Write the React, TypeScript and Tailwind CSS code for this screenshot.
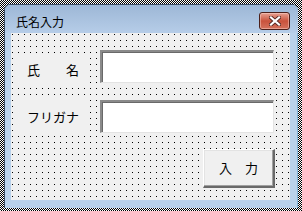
import React from "react";

function CloseIcon() {
  return (
    <svg width="12" height="10" viewBox="0 0 12 10">
      <path d="M2 1.5 L10 8.5 M10 1.5 L2 8.5" stroke="#5a2a24" strokeWidth="4" strokeLinecap="square" />
      <path d="M2 1.5 L10 8.5 M10 1.5 L2 8.5" stroke="#ffffff" strokeWidth="2.2" strokeLinecap="square" />
    </svg>
  );
}

export default function App() {
  const jp = "font-['Noto_Sans_CJK_JP','Noto_Sans_CJK_SC',sans-serif]";
  return (
    <div
      className={`w-[302px] h-[211px] pt-[4px] pl-[4px] bg-[repeating-conic-gradient(#000_0_25%,#fff_0_50%)] bg-size-[2px_2px] ${jp}`}
    >
      <div className="w-[294px] h-[204px] flex flex-col bg-[#b9d1ea] border-l border-t border-[#3b4d63] border-r-[#2bb8d8] border-b-[#2bb8d8] rounded-t-[6px] overflow-hidden shadow-[inset_-1px_0_0_#7fb3d6]">
        <div className="h-[28px] flex items-start bg-gradient-to-b from-[#9db7d6] to-[#b6cde8]">
          <span className="pl-[11px] pt-[10px] text-[12px] leading-[14px] text-black">
            氏名入力
          </span>
          <div className="ml-auto mr-[8px] mt-[7px] w-[31px] h-[18px] rounded-[3px] border border-[#4b1f1a] bg-gradient-to-b from-[#e6a193] via-[#c9523c] to-[#d4715c] flex items-center justify-center shadow-[inset_0_0_0_1px_rgba(255,220,210,0.45)]">
            <CloseIcon />
          </div>
        </div>
        <div className="ml-[6px] w-[279px] h-[167px] bg-[#f0f0f0] bg-[linear-gradient(transparent_1px,#f0f0f0_1px),linear-gradient(90deg,#000_1px,transparent_1px)] bg-size-[6px_6px] bg-[position:1px_1px] pt-[17px] pl-[3px] text-[13px] text-black">
          <div className="flex items-start">
            <div className="mt-[5px] w-[72px] h-[30px] bg-[#f0f0f0] pl-[13px] flex items-center leading-[16px]">
              氏　　名
            </div>
            <div className="ml-[14px] w-[174px] h-[33px] bg-white border-t-2 border-l-2 border-t-[#8a8a8a] border-l-[#8a8a8a] border-b border-r border-b-[#e3e3e3] border-r-[#e3e3e3] shadow-[inset_1px_1px_0_#696969]" />
          </div>
          <div className="flex items-start mt-[15px]">
            <div className="-mt-[1px] w-[72px] h-[36px] bg-[#f0f0f0] pl-[13px] flex items-center leading-[16px]">
              フリガナ
            </div>
            <div className="ml-[14px] w-[174px] h-[33px] bg-white border-t-2 border-l-2 border-t-[#8a8a8a] border-l-[#8a8a8a] border-b border-r border-b-[#e3e3e3] border-r-[#e3e3e3] shadow-[inset_1px_1px_0_#696969]" />
          </div>
          <div className="mt-[14px] ml-[189px] w-[72px] h-[39px] bg-[#f0f0f0] border-t border-l border-t-[#ffffff] border-l-[#ffffff] border-b-2 border-r-2 border-b-[#696969] border-r-[#696969] shadow-[inset_-1px_-1px_0_#a0a0a0,inset_1px_1px_0_#e3e3e3] flex items-center justify-center leading-[16px]">
            入　力
          </div>
        </div>
      </div>
    </div>
  );
}
